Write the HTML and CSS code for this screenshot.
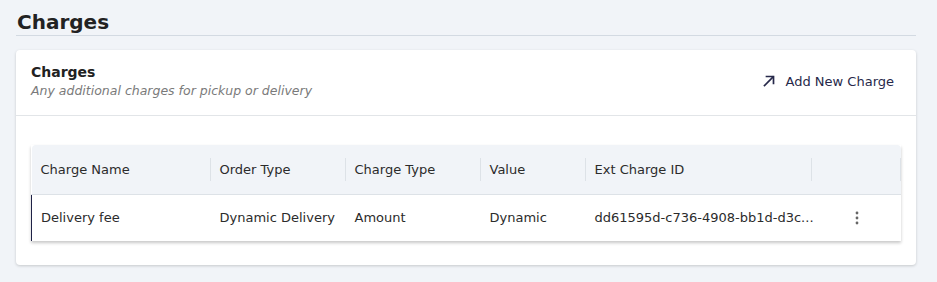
FILE: index.html
```html
<!DOCTYPE html>
<html lang="en">

<head>
  <meta charset="UTF-8">
  <meta name="viewport" content="width=device-width, initial-scale=1.0">
  <title>Charges</title>
  <link rel="stylesheet" href="styles.css">
</head>

<body>
  <div class="page-wrapper">
    <div class="heading">
      <h1>Charges</h1>
    </div>

    <div class="card">
      <div class="card-header">
        <div class="card-title">
          <h2>Charges</h2>
          <p>Any additional charges for pickup or delivery</p>
        </div>
        <button class="add-btn">
          <svg width="12" height="12" viewBox="0 0 12 12" fill="none" stroke="currentColor" stroke-width="1.7" stroke-linecap="square">
            <path d="M1.5 10.5 L10 2" />
            <path d="M3.5 1.5 H10.5 V8.5" />
          </svg>
          <span>Add New Charge</span>
        </button>
      </div>

      <div class="card-body">
        <table class="charges-table">
          <colgroup>
            <col style="width: 179px">
            <col style="width: 135px">
            <col style="width: 135px">
            <col style="width: 105px">
            <col style="width: 226px">
            <col>
          </colgroup>
          <thead>
            <tr>
              <th>Charge Name</th>
              <th>Order Type</th>
              <th>Charge Type</th>
              <th>Value</th>
              <th>Ext Charge ID</th>
              <th></th>
            </tr>
          </thead>
          <tbody>
            <tr>
              <td>Delivery fee</td>
              <td>Dynamic Delivery</td>
              <td>Amount</td>
              <td>Dynamic</td>
              <td class="ext-id">dd61595d-c736-4908-bb1d-d3c...</td>
              <td class="actions">
                <svg width="4" height="14" viewBox="0 0 4 14" fill="currentColor">
                  <circle cx="2" cy="2" r="1.4" />
                  <circle cx="2" cy="7" r="1.4" />
                  <circle cx="2" cy="12" r="1.4" />
                </svg>
              </td>
            </tr>
          </tbody>
        </table>
      </div>
    </div>
  </div>
</body>

</html>
```

FILE: styles.css
```css
* {
  margin: 0;
  padding: 0;
  box-sizing: border-box;
  font-family: "DejaVu Sans", sans-serif;
}

html,
body {
  height: 100%;
  width: 100%;
  background-color: #f1f4f8;
  color: #2b2b2b;
}

.page-wrapper {
  padding: 9px 21px 0 16px;
}

.heading h1 {
  font-size: 20px;
  font-weight: 700;
  line-height: 26px;
  color: #222;
  padding-left: 1px;
  border-bottom: 1px solid #d3dae2;
  margin-bottom: 14px;
}

.card {
  background: #fff;
  border-radius: 4px;
  box-shadow: 0 1px 3px rgba(0, 0, 0, 0.18);
}

.card-header {
  display: flex;
  justify-content: space-between;
  align-items: center;
  padding: 13px 22px 14px 15px;
  border-bottom: 1px solid #e2e5e8;
}

.card-title h2 {
  font-size: 14px;
  font-weight: 700;
  line-height: 18px;
  color: #222;
}

.card-title p {
  font-size: 12.5px;
  font-style: italic;
  line-height: 20px;
  color: #7a7a7a;
}

.add-btn {
  display: flex;
  align-items: center;
  gap: 11px;
  border: none;
  background: none;
  font-size: 13px;
  color: #27294a;
  cursor: pointer;
  margin-top: -2px;
}

.card-body {
  padding: 29px 15px 24px 15px;
}

.charges-table {
  width: 100%;
  border-collapse: collapse;
  table-layout: fixed;
  box-shadow: 0 2px 3px rgba(0, 0, 0, 0.22);
}

.charges-table th,
.charges-table td {
  text-align: left;
  font-size: 13px;
  white-space: nowrap;
}

.charges-table th {
  position: relative;
  height: 49px;
  padding: 0 9px;
  font-weight: 400;
  background-color: #f1f4f8;
  border-bottom: 1px solid #dde2e7;
}

.charges-table th:first-child {
  border-top-left-radius: 4px;
}

.charges-table th:last-child {
  border-top-right-radius: 4px;
}

.charges-table th::after {
  content: "";
  position: absolute;
  right: 0;
  top: 13px;
  bottom: 13px;
  width: 1px;
  background-color: #dde2e7;
}

.charges-table td {
  height: 47px;
  padding: 0 9px;
  background: #fff;
}

.charges-table td:first-child {
  padding-left: 9px;
  border-left: 1px solid #1f2246;
}

.charges-table td.ext-id {
  overflow: visible;
}

.charges-table td.actions {
  padding-left: 43px;
  color: #666;
}

.charges-table td.actions svg {
  display: block;
}
```
